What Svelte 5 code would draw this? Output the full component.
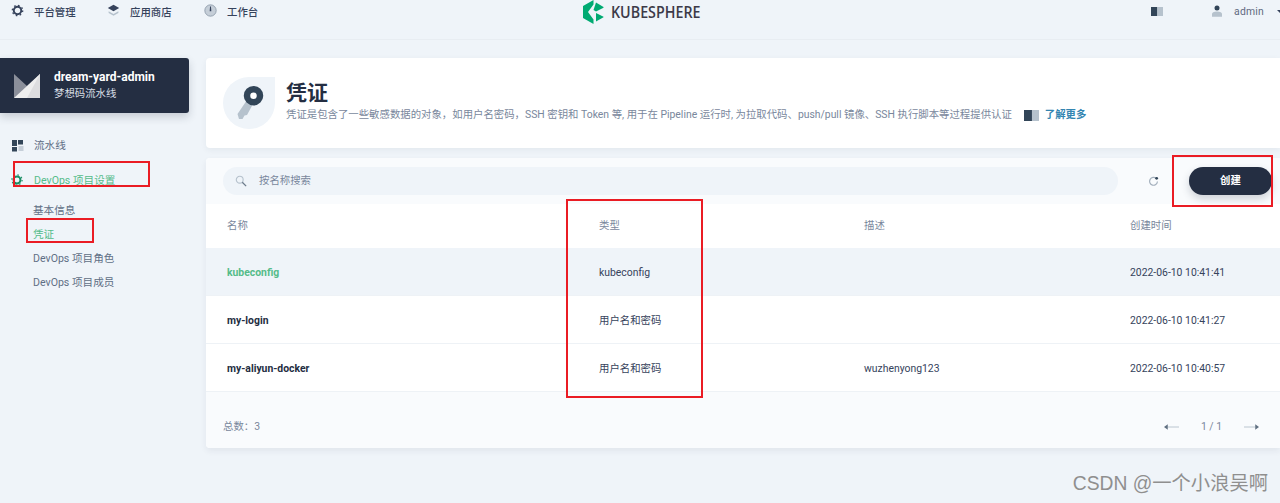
<script>
  const rows = [
    { name: 'kubeconfig', type: 'kubeconfig', desc: '', time: '2022-06-10 10:41:41', hover: true },
    { name: 'my-login', type: '用户名和密码', desc: '', time: '2022-06-10 10:41:27' },
    { name: 'my-aliyun-docker', type: '用户名和密码', desc: 'wuzhenyong123', time: '2022-06-10 10:40:57' }
  ];
</script>

{#snippet book()}
  <svg class="book" viewBox="0 0 16 12" preserveAspectRatio="none">
    <rect x="0" y="0" width="8.500" height="12" fill="#324558" />
    <rect x="8.500" y="0" width="7.500" height="12" fill="#b6c2cd" />
  </svg>
{/snippet}

<div class="page">
  <header class="topbar">
    <nav class="topnav">
      <span class="topitem first">
        <svg viewBox="0 0 16 16" width="13" height="13" class="up">
          <circle cx="8" cy="8" r="4.600" fill="none" stroke="#36435c" stroke-width="2.400" />
          <circle cx="8" cy="8" r="6.400" fill="none" stroke="#36435c" stroke-width="1.600" stroke-dasharray="2 3" />
        </svg>
        <b>平台管理</b>
      </span>
      <span class="topitem second">
        <svg viewBox="0 0 16 16" width="13" height="13" class="up">
          <path d="M8 1l7 4-7 4-7-4z" fill="#36435c" />
          <path d="M2 9l6 3.400L14 9v2l-6 3.500L2 11z" fill="#b6c2cd" />
        </svg>
        <b>应用商店</b>
      </span>
      <span class="topitem third">
        <svg viewBox="0 0 16 16" width="13" height="13" class="up">
          <circle cx="8" cy="8" r="7" fill="#c5ced8" stroke="#8a97a6" stroke-width="1" />
          <path d="M7.400 3h1.200l.4 6H7z" fill="#36435c" />
        </svg>
        <b>工作台</b>
      </span>
    </nav>
    <div class="logo">
      <svg viewBox="0 0 21 24" width="21" height="24">
        <path d="M10.500 0L0 6v12l10.500 6v-4.500L5 12l5.500-7.500z" fill="#00aa72" />
        <path d="M13 2.500L20.500 7v.8L13 11.500l-2.500-1.500z" fill="#00aa72" />
        <path d="M13 13l7.500 3.700v.5L13 21.500z" fill="#00aa72" />
      </svg>
      <span>KUBESPHERE</span>
    </div>
    <div class="topright">
      {@render book()}
      <svg class="user" viewBox="0 0 12 14" width="10" height="12">
        <circle cx="6" cy="3.400" r="3" fill="#324558" />
        <path d="M0 14v-3.500C0 8.500 2 7.500 6 7.500s6 1 6 3V14z" fill="#b6c2cd" />
      </svg>
      <span class="admin">admin</span>
      <span class="caret"></span>
    </div>
  </header>

  <div class="body">
    <aside class="side">
      <div class="project">
        <svg viewBox="0 0 26 24" width="26" height="24">
          <path d="M0 0l13 12L26 0v24H0z" fill="#8b8f9a" />
          <path d="M26 0v24H0z" fill="#eeeeee" />
          <path d="M26 0v24H13z" fill="#dddddf" />
        </svg>
        <div>
          <div class="pname">dream-yard-admin</div>
          <div class="psub">梦想码流水线</div>
        </div>
      </div>

      <div class="menu">
        <div class="mitem">
          <svg viewBox="0 0 12 12" width="12" height="12">
            <rect x="0" y="0" width="5" height="6" fill="#324558" />
            <rect x="6" y="0" width="5" height="4.500" fill="#324558" />
            <rect x="0" y="7" width="5" height="4.500" fill="#324558" />
            <rect x="6.500" y="6" width="5" height="5" fill="#c5ced8" />
          </svg>
          <span>流水线</span>
        </div>
        <div class="mitem active">
          <svg viewBox="0 0 16 16" width="12" height="12">
            <circle cx="8" cy="8" r="4.600" fill="none" stroke="#1b8e65" stroke-width="2.600" />
            <circle cx="8" cy="8" r="6.800" fill="none" stroke="#1b8e65" stroke-width="1.600" stroke-dasharray="2 3.300" />
          </svg>
          <span>DevOps 项目设置</span>
        </div>
        <ul class="sub">
          <li>基本信息</li>
          <li class="on">凭证</li>
          <li>DevOps 项目角色</li>
          <li>DevOps 项目成员</li>
        </ul>
      </div>
    </aside>

    <main class="main">
      <section class="banner">
        <div class="blob">
          <svg viewBox="0 0 52 52" width="52" height="52">
            <path d="M24 23l6 4-6 11-2.500.5-2 3.500H16l-1.500-5z" fill="#b6c2cd" />
            <circle cx="30.500" cy="18.700" r="6.500" fill="#fff" stroke="#324558" stroke-width="6.500" />
          </svg>
        </div>
        <div class="btext">
          <h1>凭证</h1>
          <p>
            凭证是包含了一些敏感数据的对象，如用户名密码，SSH 密钥和 Token 等, 用于在 Pipeline 运行时, 为拉取代码、push/pull 镜像、SSH 执行脚本等过程提供认证
            <span class="learn">{@render book()}<a href="#top">了解更多</a></span>
          </p>
        </div>
      </section>

      <section class="card">
        <div class="toolbar">
          <div class="search">
            <svg viewBox="0 0 14 14" width="12" height="12">
              <circle cx="5.500" cy="5.500" r="4" fill="none" stroke="#b6c2cd" stroke-width="1.300" />
              <path d="M8.500 8.500L13 13" stroke="#6b7a8a" stroke-width="1.500" />
            </svg>
            <span>按名称搜索</span>
          </div>
          <svg class="refresh" viewBox="0 0 14 14" width="11" height="11">
            <path d="M10.500 3.200A5 5 0 1 0 12 7" fill="none" stroke="#a4b0bd" stroke-width="1.500" />
            <circle cx="11" cy="3" r="1.800" fill="#324558" />
          </svg>
          <button class="create">创建</button>
        </div>

        <div class="row head">
          <div>名称</div>
          <div>类型</div>
          <div>描述</div>
          <div>创建时间</div>
        </div>
        {#each rows as row}
          <div class="row" class:hover={row.hover}>
            <div class="name">{row.name}</div>
            <div>{row.type}</div>
            <div>{row.desc}</div>
            <div>{row.time}</div>
          </div>
        {/each}

        <div class="foot">
          <span>总数：3</span>
          <div class="pager">
            <svg viewBox="0 0 16 8" width="15" height="8">
              <path d="M4 4h12" stroke="#b6c2cd" stroke-width="1" />
              <path d="M0 4l4-3v6z" fill="#5f6f80" />
            </svg>
            <span>1 / 1</span>
            <svg viewBox="0 0 16 8" width="15" height="8">
              <path d="M0 4h12" stroke="#b6c2cd" stroke-width="1" />
              <path d="M16 4l-4-3v6z" fill="#5f6f80" />
            </svg>
          </div>
        </div>
      </section>
    </main>
  </div>

  <!-- red annotation boxes drawn on top of the screenshot -->
  <div class="mark m1"></div>
  <div class="mark m2"></div>
  <div class="mark m3"></div>
  <div class="mark m4"></div>
  <div class="watermark">CSDN @一个小浪吴啊</div>
</div>

<style>
  :global(body) {
    margin: 0;
    background: #eff4f9;
  }

  .page {
    position: relative;
    height: 503px;
    overflow: hidden;
    background: #eff4f9;
    color: #36435c;
    font: 400 10.4px/14px Roboto, "Noto Sans CJK SC", sans-serif;
  }

  .topbar {
    position: relative;
    display: flex;
    justify-content: space-between;
    height: 39px;
    border-bottom: 1px solid #e8edf2;
  }

  .topnav {
    display: flex;
    padding: 5px 0 0 11px;
  }

  .topitem {
    display: flex;
    gap: 10px;
    height: 14px;
    align-items: center;
  }

  .topitem b {
    font-weight: 500;
    color: #36435c;
    margin-top: 1px;
  }

  .up {
    margin-top: -3px;
  }

  .first {
    width: 96px;
  }

  .second {
    width: 97px;
  }

  .logo {
    position: absolute;
    left: 583px;
    top: 0;
    display: flex;
    align-items: center;
    gap: 7px;
    height: 24px;
    font: 600 17px/24px "Open Sans", sans-serif;
    color: #3c3a48;
  }

  .logo span {
    transform: scaleX(0.84);
    transform-origin: left center;
  }

  .topright {
    display: flex;
    align-items: center;
    height: 22px;
  }

  .book {
    display: block;
    width: 15px;
    height: 11px;
  }

  .topright .book {
    width: 12px;
    height: 9px;
  }

  .user {
    margin-left: 49px;
  }

  .admin {
    margin-left: 12px;
    margin-top: 1px;
    color: #5f6a80;
    letter-spacing: 0.2px;
  }

  .caret {
    margin: 3px -3px 0 13px;
    width: 0;
    height: 0;
    border: 3px solid transparent;
    border-top-color: #36435c;
  }

  .body {
    display: flex;
    padding-top: 18px;
  }

  .side {
    flex: none;
    width: 206px;
  }

  .project {
    display: flex;
    align-items: center;
    gap: 14px;
    box-sizing: border-box;
    width: 189px;
    height: 55px;
    padding-left: 14px;
    background: #242e42;
    border-radius: 0 3px 3px 0;
    box-shadow: 0 4px 8px rgba(36, 46, 66, 0.2);
    color: #fff;
  }

  .pname {
    font-size: 12px;
    font-weight: 700;
    line-height: 16px;
  }

  .psub {
    line-height: 16px;
    color: #d8dee5;
    margin-top: 1px;
  }

  .menu {
    padding: 25px 0 0 12px;
  }

  .mitem {
    display: flex;
    align-items: center;
    gap: 10px;
    height: 16px;
    color: #5f6f85;
    font-size: 10.600px;
  }

  .mitem.active {
    margin-top: 18px;
    color: #55bc8a;
    position: relative;
    left: -1px;
  }

  .mitem.active span {
    margin-top: 2px;
    margin-left: 1px;
  }

  .sub {
    list-style: none;
    margin: 11px 0 0 21px;
    padding: 0;
  }

  .sub li {
    height: 24px;
    line-height: 24px;
    color: #5f6f85;
    font-size: 10.600px;
  }

  .sub li.on {
    color: #55bc8a;
  }

  .main {
    flex: 1;
    min-width: 0;
  }

  .banner {
    display: flex;
    gap: 11px;
    height: 90px;
    box-sizing: border-box;
    padding: 19px 0 0 17px;
    background: #fff;
    border-radius: 4px 0 0 4px;
    box-shadow: 0 2px 6px rgba(36, 46, 66, 0.06);
  }

  .blob {
    flex: none;
    width: 52px;
    height: 52px;
    background: #eff4f9;
    border-radius: 50% 0 50% 50%;
  }

  .btext h1 {
    margin: 4px 0 0;
    font-size: 21px;
    line-height: 24px;
    font-weight: 700;
    color: #242e42;
  }

  .btext p {
    margin: 2px 0 0;
    color: #79879c;
    line-height: 16px;
    white-space: nowrap;
    display: flex;
    align-items: center;
    gap: 4px;
  }

  .learn {
    display: inline-flex;
    align-items: center;
    gap: 5px;
    margin-left: 8px;
  }

  .learn a {
    color: #3385b1;
    font-weight: 700;
    text-decoration: none;
    margin-left: 1px;
  }

  .card {
    margin-top: 10px;
    background: #fff;
    border-radius: 4px 0 0 4px;
    box-shadow: 0 3px 6px rgba(36, 46, 66, 0.07);
  }

  .toolbar {
    display: flex;
    align-items: center;
    height: 46px;
    padding: 0 8px 0 17px;
    background: #f9fbfd;
    border-radius: 4px 0 0 0;
  }

  .search {
    display: flex;
    align-items: center;
    gap: 12px;
    flex: 1;
    height: 28px;
    padding-left: 12px;
    background: #eff4f9;
    border-radius: 14px;
    color: #79879c;
  }

  .refresh {
    margin: 0 30px;
  }

  .create {
    width: 83px;
    height: 28px;
    padding: 0;
    border: 0;
    border-radius: 14px;
    background: #242e42;
    color: #fff;
    font: 700 10.4px/14px Roboto, "Noto Sans CJK SC", sans-serif;
    box-shadow: 0 4px 8px rgba(36, 46, 66, 0.2);
  }

  .row {
    display: grid;
    grid-template-columns: 372px 265px 266px 1fr;
    align-items: center;
    height: 48px;
    box-sizing: border-box;
    padding: 2px 0 0 21px;
    border-bottom: 1px solid #eef2f6;
    color: #36435c;
  }

  .row.head {
    height: 44px;
    padding-top: 0;
    border-bottom: 0;
    color: #79879c;
  }

  .row.hover {
    background: #eff4f9;
  }

  .name {
    font-weight: 700;
    color: #242e42;
  }

  .hover .name {
    color: #55bc8a;
  }

  .foot {
    display: flex;
    justify-content: space-between;
    align-items: center;
    height: 56px;
    padding: 14px 21px 0 17px;
    box-sizing: border-box;
    background: #f9fbfd;
    color: #79879c;
    border-radius: 0 0 0 4px;
  }

  .pager {
    display: flex;
    align-items: center;
    gap: 22px;
  }

  .mark {
    position: absolute;
    box-sizing: border-box;
    border: 2px solid #ea1c24;
  }

  .m1 {
    left: 13px;
    top: 161px;
    width: 137px;
    height: 26px;
  }

  .m2 {
    left: 26px;
    top: 218px;
    width: 68px;
    height: 25px;
  }

  .m3 {
    left: 566px;
    top: 199px;
    width: 137px;
    height: 199px;
  }

  .m4 {
    left: 1172px;
    top: 155px;
    width: 101px;
    height: 52px;
  }

  .watermark {
    position: absolute;
    right: 12px;
    bottom: 7px;
    font: 400 19.300px/24px "Liberation Sans", "Noto Sans CJK SC", sans-serif;
    color: #8f8f8f;
  }
</style>
